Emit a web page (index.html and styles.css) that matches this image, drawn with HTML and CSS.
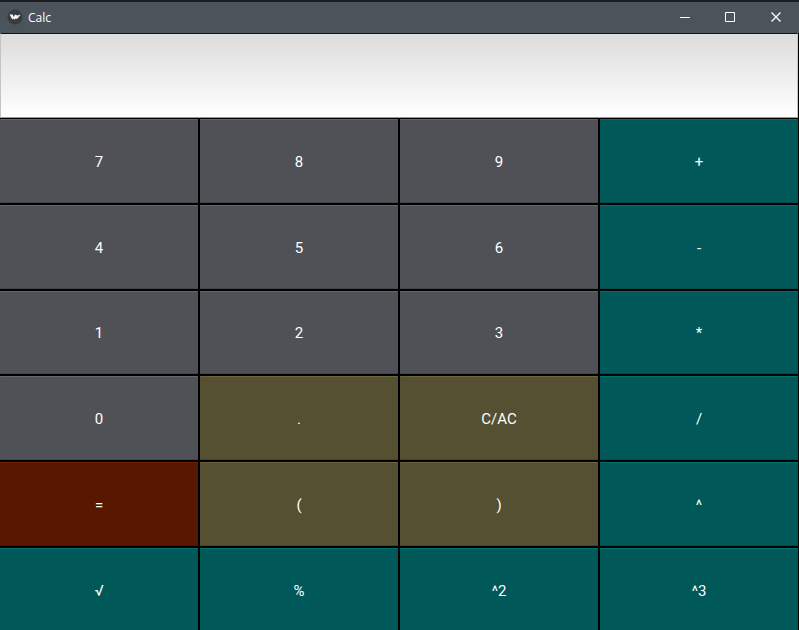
FILE: index.html
```
<!DOCTYPE html>
<html lang="en"><head><meta charset="utf-8"><title>Calc</title><link rel="stylesheet" href="styles.css"></head>
<body>
<header class="titlebar">
<svg class="logo" width="16" height="16" viewBox="0 0 16 16"><circle cx="8" cy="8" r="7.5" fill="#393b3d"/><path d="M2.500 5.500L5.700 5.500L6.700 8L8 5.500L10.300 6.500L13.800 5.500L10 10L8.500 9.500L7.500 10.800L6.300 9.500L5.300 10.500Z" fill="#f4f4f4"/></svg>
<span class="title">Calc</span>
<svg class="controls" width="138" height="32" viewBox="0 0 138 32" fill="none" stroke="#fff"><path d="M19 16.500H29M64.500 11.500H73.500V20.500H64.500Z"/><path stroke-width="1.300" d="M110.500 11.500L119.500 20.500M119.500 11.500L110.500 20.500"/></svg>
</header>
<div class="display"></div>
<main class="keys">
<button>7</button><button>8</button><button>9</button><button class="op">+</button>
<button>4</button><button>5</button><button>6</button><button class="op">-</button>
<button>1</button><button>2</button><button>3</button><button class="op">*</button>
<button>0</button><button class="edit">.</button><button class="edit">C/AC</button><button class="op">/</button>
<button class="equals">=</button><button class="edit">(</button><button class="edit">)</button><button class="op">^</button>
<button class="op">√</button><button class="op">%</button><button class="op">^2</button><button class="op">^3</button>
</main>
</body></html>
```
FILE: styles.css
```
*{box-sizing:border-box}
body{margin:0;width:799px;height:630px;overflow:hidden;background:#000;color:#fff;font-family:Roboto,sans-serif}
.titlebar{height:33px;background:#4a545a;border-top:2px solid #1b1e20;padding-bottom:1px;display:flex;align-items:center;padding-left:7px}
.title{font:12px "Open Sans",sans-serif;margin-left:5px}
.controls{margin-left:auto}
.display{width:798px;height:85px;border:1px solid #c4c4c4;border-top-color:#111;border-bottom-color:#999;background:linear-gradient(#dcdcdc,#fff)}
.keys{display:grid;grid-template-columns:repeat(4,198px);grid-auto-rows:83.800px;gap:2px;padding-top:1px}
button{border:0;border-radius:1px;background:#505156;color:#fff;font:15px Roboto,sans-serif;padding:2px 0 0;box-shadow:inset 0 1px #66676b,inset 0 -1px #45464a}
.op{background:#005858;box-shadow:inset 0 1px #007070,inset 0 -1px #004e4e}
.edit{background:#545031;box-shadow:inset 0 1px #6b663d,inset 0 -1px #484429}
.equals{background:#581800;box-shadow:inset 0 1px #701f00,inset 0 -1px #491400}
```
